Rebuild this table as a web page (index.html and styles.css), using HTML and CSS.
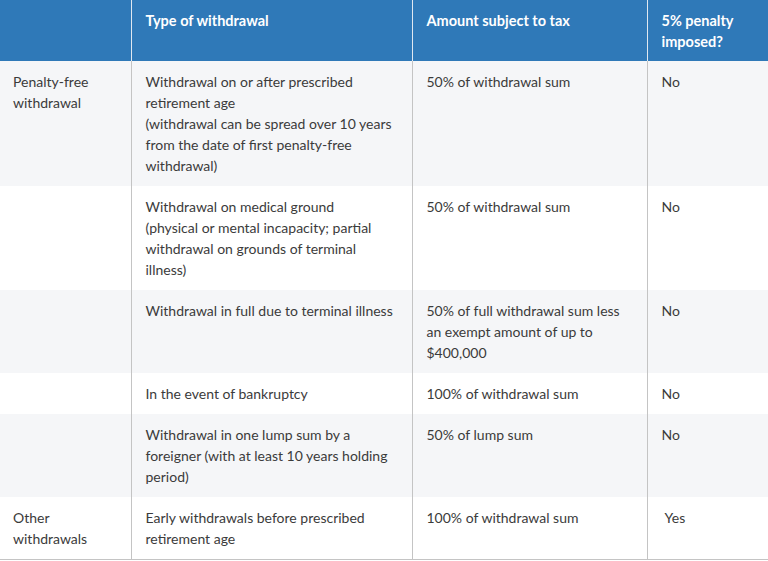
FILE: index.html
```html
<!DOCTYPE html>
<html lang="en">
<head>
<meta charset="utf-8">
<title>Withdrawals</title>
<link rel="stylesheet" href="styles.css">
</head>
<body>
<table class="tax-table">
  <colgroup>
    <col class="c1"><col class="c2"><col class="c3"><col class="c4">
  </colgroup>
  <thead>
    <tr>
      <th></th>
      <th>Type of withdrawal</th>
      <th>Amount subject to tax</th>
      <th>5% penalty imposed?</th>
    </tr>
  </thead>
  <tbody>
    <tr class="alt">
      <td>Penalty-free withdrawal</td>
      <td>Withdrawal on or after prescribed retirement age<br>(withdrawal can be spread over 10 years from the date of first penalty-free withdrawal)</td>
      <td>50% of withdrawal sum</td>
      <td>No</td>
    </tr>
    <tr>
      <td></td>
      <td>Withdrawal on medical ground<br>(physical or mental incapacity; partial withdrawal on grounds of terminal illness)</td>
      <td>50% of withdrawal sum</td>
      <td>No</td>
    </tr>
    <tr class="alt">
      <td></td>
      <td>Withdrawal in full due to terminal illness</td>
      <td>50% of full withdrawal sum less an exempt amount of up to $400,000</td>
      <td>No</td>
    </tr>
    <tr>
      <td></td>
      <td>In the event of bankruptcy</td>
      <td>100% of withdrawal sum</td>
      <td>No</td>
    </tr>
    <tr class="alt">
      <td></td>
      <td>Withdrawal in one lump sum by a foreigner (with at least 10 years holding period)</td>
      <td>50% of lump sum</td>
      <td>No</td>
    </tr>
    <tr class="last">
      <td>Other withdrawals</td>
      <td>Early withdrawals before prescribed retirement age</td>
      <td>100% of withdrawal sum</td>
      <td>&nbsp;Yes</td>
    </tr>
  </tbody>
</table>
</body>
</html>
```

FILE: styles.css
```css
html, body {
  margin: 0;
  padding: 0;
  background: #ffffff;
}
body {
  font-family: "Lato", "Open Sans", sans-serif;
  font-size: 14px;
  line-height: 21px;
  color: #3b3b3b;
}
.tax-table {
  width: 768px;
  border-collapse: collapse;
  table-layout: fixed;
}
.c1 { width: 131px; }
.c2 { width: 281px; }
.c3 { width: 235px; }
.c4 { width: 121px; }
.tax-table th {
  background: #2f79b8;
  color: #ffffff;
  font-size: 14.5px;
  font-weight: 700;
  text-align: left;
  vertical-align: top;
  padding: 10px 14px 9px 14px;
  border-left: 1px solid #dfe8f1;
}
.tax-table th:first-child,
.tax-table td:first-child {
  border-left: none;
  padding-left: 13px;
}
.tax-table td {
  vertical-align: top;
  padding: 10px 14px;
  border-left: 1px solid #c4c4c4;
}
.tax-table tr.alt td {
  background: #f5f6f8;
}
.tax-table tr.last td {
  border-bottom: 1px solid #c4c4c4;
}
```
